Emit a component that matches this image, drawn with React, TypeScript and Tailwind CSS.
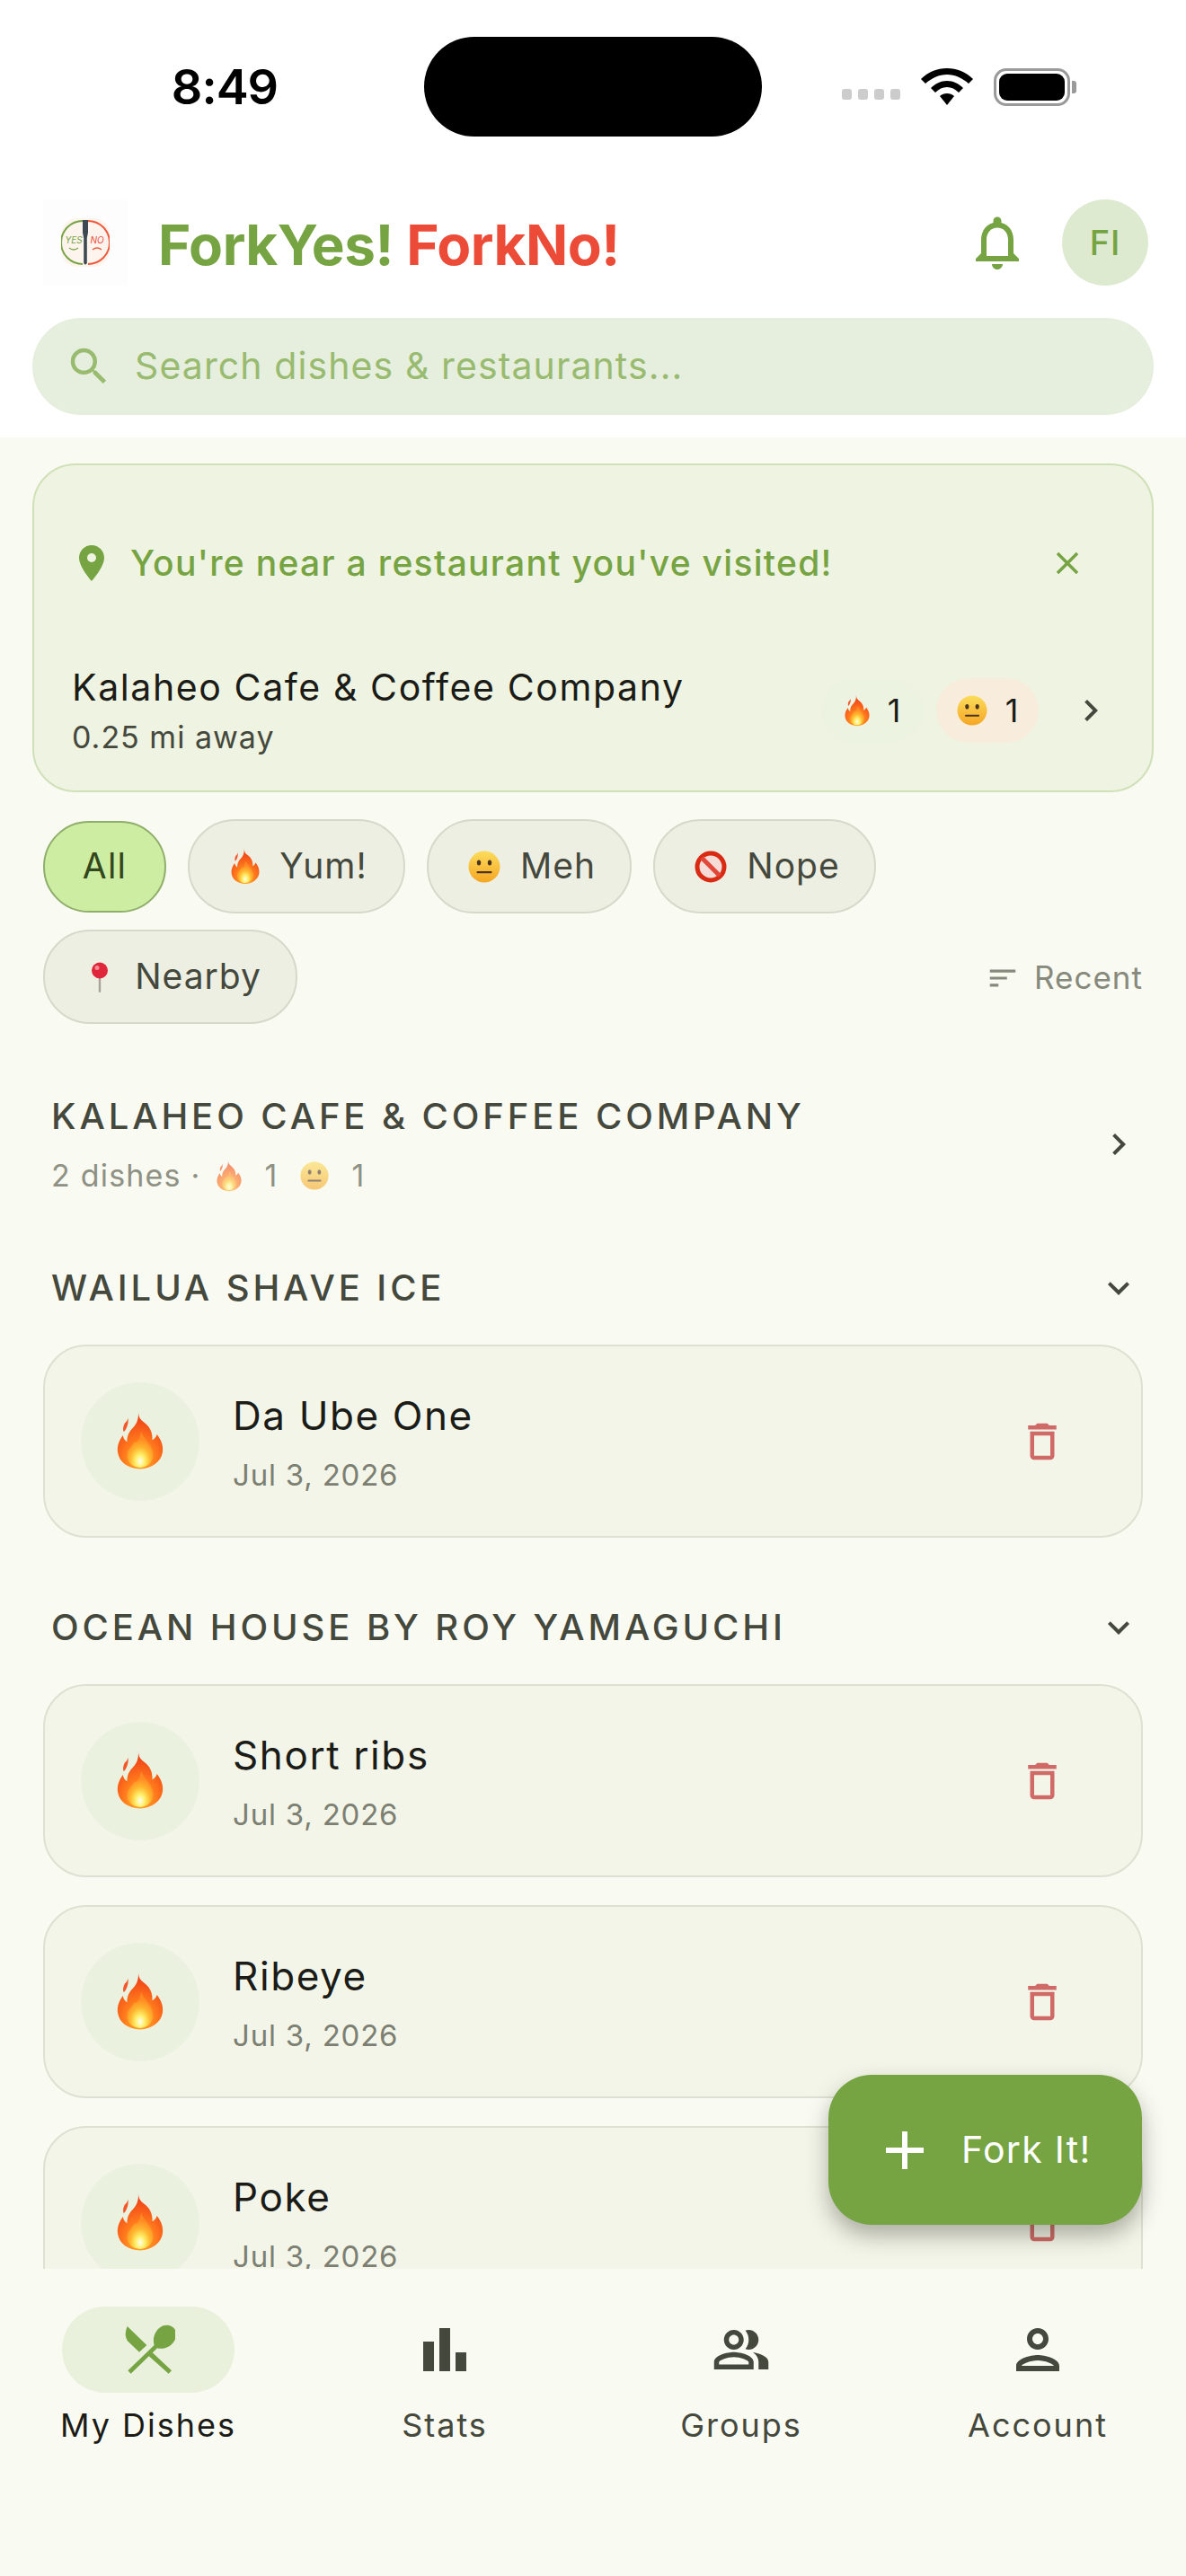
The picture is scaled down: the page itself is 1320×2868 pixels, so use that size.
import { ReactNode } from "react";
import {
  MdOutlineNotifications,
  MdSearch,
  MdLocationOn,
  MdClose,
  MdChevronRight,
  MdExpandMore,
  MdOutlineDelete,
  MdSort,
  MdAdd,
  MdBarChart,
  MdOutlinePeopleAlt,
  MdOutlinePerson,
} from "react-icons/md";

function Flame({ size }: { size: number }) {
  return (
    <svg width={size} height={size * 1.25} viewBox="0 0 100 125" className="shrink-0">
      <defs>
        <radialGradient id="flameFill" cx="50%" cy="85%" r="80%">
          <stop offset="0%" stopColor="#ffb52e" />
          <stop offset="45%" stopColor="#ff7a1c" />
          <stop offset="100%" stopColor="#ee3a17" />
        </radialGradient>
        <radialGradient id="flameCore" cx="50%" cy="82%" r="62%">
          <stop offset="0%" stopColor="#fffef0" />
          <stop offset="28%" stopColor="#fff06a" />
          <stop offset="62%" stopColor="#ffb52e" />
          <stop offset="100%" stopColor="#ff8a24" />
        </radialGradient>
      </defs>
      <path
        d="M46 0C47 12 50 16 58 22C70 31 77 42 76 60C80 58 84 54 86 48C95 60 100 72 98 86C95 106 76 121 50 122C24 121 5 108 2 86C0 72 6 60 13 50C14 56 17 61 22 64C22 50 26 42 36 32C43 25 47 14 46 0Z"
        fill="url(#flameFill)"
      />
      <path d="M17 24C20 22 23 18 24 13C26 24 21 37 15 43C12 37 14 30 17 24Z" fill="#f4562a" />
      <path
        d="M52 42C55 56 76 68 78 90C79 108 64 119 50 119C34 119 21 108 22 92C23 80 33 74 38 64C43 68 50 58 52 42Z"
        fill="url(#flameCore)"
      />
    </svg>
  );
}

function Meh({ size }: { size: number }) {
  return (
    <svg width={size} height={size} viewBox="0 0 36 36" className="shrink-0">
      <defs>
        <linearGradient id="mehFill" x1="0" y1="0" x2="0" y2="1">
          <stop offset="0%" stopColor="#fcdc5c" />
          <stop offset="100%" stopColor="#f5a623" />
        </linearGradient>
      </defs>
      <circle cx="18" cy="18" r="17.5" fill="url(#mehFill)" />
      <ellipse cx="12" cy="13.5" rx="2.2" ry="3" fill="#4a3420" />
      <ellipse cx="24" cy="13.5" rx="2.2" ry="3" fill="#4a3420" />
      <rect x="9.5" y="23" width="17" height="2.2" rx="1" fill="#4a3420" />
    </svg>
  );
}

function Nope({ size }: { size: number }) {
  return (
    <svg width={size} height={size} viewBox="0 0 36 36" className="shrink-0">
      <circle cx="18" cy="18" r="15" fill="#f6dcd6" stroke="#d92b14" strokeWidth="5" />
      <path d="M8 8L28 28" stroke="#e2483a" strokeWidth="5" />
    </svg>
  );
}

function RedPin() {
  return (
    <svg width={34} height={34} viewBox="-5 0 34 34" className="shrink-0">
      <rect x="10.800" y="12" width="2.400" height="22" rx="1.200" fill="#a9a49a" />
      <circle cx="12" cy="9.500" r="9" fill="#e0263a" />
      <circle cx="9" cy="6.500" r="2.500" fill="#f58a94" />
    </svg>
  );
}

function Logo() {
  return (
    <div className="w-[94px] h-[94px] bg-[#fdfdfd] flex items-center justify-center">
      <svg width={54} height={54} viewBox="0 0 54 54">
        <rect x="0" y="0" width="54" height="54" rx="18" fill="#fdf4ee" />
        <path d="M24 3A24 24 0 0 0 24 51" fill="none" stroke="#76a443" strokeWidth="2" />
        <path d="M30 3A24 24 0 0 1 30 51" fill="none" stroke="#ef5a3c" strokeWidth="2" />
        <path d="M24 2H30V16L28.800 22V50Q27 53 25.200 50V22L24 16Z" fill="#3d4a52" />
        <text x="14" y="28" fontSize="10" fontFamily="Inter, sans-serif" fontStyle="italic" fill="#76a443" textAnchor="middle">YES</text>
        <text x="40" y="28" fontSize="10" fontFamily="Inter, sans-serif" fontStyle="italic" fill="#ef4b38" textAnchor="middle">NO</text>
        <path d="M9 33Q14 37 19 33" fill="none" stroke="#76a443" strokeWidth="1.300" />
        <path d="M35 35Q40 31 45 35" fill="none" stroke="#ef5a3c" strokeWidth="1.300" />
      </svg>
    </div>
  );
}

function StatusBar() {
  return (
    <div className="h-[222px] pt-[41px] flex items-start">
      <div className="w-[472px] h-[111px] flex items-center justify-center pl-[28px]">
        <span className="text-[54px] font-semibold text-black font-['Inter',sans-serif] tracking-[-1px]">8:49</span>
      </div>
      <div className="w-[376px] h-[111px] rounded-[56px] bg-black" />
      <div className="flex-1 h-[111px] flex items-center pl-[89px] gap-[25px]">
        <div className="flex items-center gap-[7px] mt-[16px]">
          <span className="w-[11px] h-[12px] rounded-[3px] bg-[#cccccc]" />
          <span className="w-[11px] h-[12px] rounded-[3px] bg-[#cccccc]" />
          <span className="w-[11px] h-[12px] rounded-[3px] bg-[#cccccc]" />
          <span className="w-[11px] h-[12px] rounded-[3px] bg-[#cccccc]" />
        </div>
        <svg width={58} height={42} viewBox="0 0 58 42" className="-ml-[2px]">
          <path d="M29 0C40 0 50 4 58 12L53 17C46 11 38 7 29 7C20 7 12 11 5 17L0 12C8 4 18 0 29 0Z" fill="#000" />
          <path d="M29 14C36 14 42 17 47 22L42 27C38 23 34 21 29 21C24 21 20 23 16 27L11 22C16 17 22 14 29 14Z" fill="#000" />
          <path d="M29 28C32 28 35 29 37 31L29 41L21 31C23 29 26 28 29 28Z" fill="#000" />
        </svg>
        <div className="flex items-center -ml-[2px]">
          <div className="w-[85px] h-[42px] rounded-[14px] border-[3px] border-[#9a9a9a] p-[3px]">
            <div className="w-full h-full rounded-[9px] bg-black" />
          </div>
          <div className="w-[5px] h-[14px] rounded-r-[3px] bg-[#9a9a9a] ml-[2px]" />
        </div>
      </div>
    </div>
  );
}

function Header() {
  return (
    <header className="bg-white h-[487px] shrink-0">
      <StatusBar />
      <div className="h-[96px] flex items-center pl-[48px] pr-[42px]">
        <Logo />
        <div className="ml-[34px] mt-[5px] flex-1 text-[62px] leading-none font-bold tracking-[-0.500px] font-['Inter',sans-serif] whitespace-nowrap">
          <span className="text-[#76a443]">ForkYes!</span> <span className="text-[#ec4b38]">ForkNo!</span>
        </div>
        <MdOutlineNotifications size={72} className="text-[#76a443] mr-[36px]" />
        <div className="w-[96px] h-[96px] rounded-full bg-[#deead0] flex items-center justify-center text-[#76a443] text-[38px] font-medium tracking-[1px]">
          FI
        </div>
      </div>
      <div className="mt-[36px] mx-[36px] h-[108px] rounded-[54px] bg-[#e6eedd] flex items-center pl-[36px]">
        <MdSearch size={54} className="text-[#98bb70]" />
        <span className="ml-[24px] text-[41px] text-[#98bb70] tracking-[1.100px]">Search dishes &amp; restaurants...</span>
      </div>
    </header>
  );
}

function CountChip({ bg, icon, n }: { bg: string; icon: ReactNode; n: number }) {
  return (
    <div className={`h-[72px] w-[114px] rounded-[36px] flex items-center justify-center gap-[20px] ${bg}`}>
      {icon}
      <span className="text-[36px] text-[#1b1c17]">{n}</span>
    </div>
  );
}

function NearbyBanner() {
  return (
    <section className="mx-[36px] mt-[29px] h-[366px] rounded-[48px] bg-[#eff3e1] border-2 border-[#d0e0b8] pl-[42px] pr-[54px]">
      <div className="h-[118px] mt-[50px] flex items-center">
        <MdLocationOn size={48} className="text-[#76a443] -ml-[2px]" />
        <span className="ml-[19px] flex-1 text-[39px] font-medium text-[#76a443] tracking-[1.300px]">
          You're near a restaurant you've visited!
        </span>
        <MdClose size={42} className="text-[#76a443] mr-[19px]" />
      </div>
      <div className="flex items-center justify-between mt-[51px]">
        <div>
          <div className="text-[41px] leading-[56px] text-[#1b1c17] tracking-[1.600px]">Kalaheo Cafe &amp; Coffee Company</div>
          <div className="text-[34px] leading-[48px] mt-[4px] text-[#45483c] tracking-[1px]">0.25 mi away</div>
        </div>
        <div className="flex items-center -mr-[10px]">
          <CountChip bg="bg-[#ecf3e0]" icon={<Flame size={28} />} n={1} />
          <div className="w-[14px]" />
          <CountChip bg="bg-[#f8ecdd]" icon={<Meh size={34} />} n={1} />
          <MdChevronRight size={48} className="text-[#45483c] ml-[34px]" />
        </div>
      </div>
    </section>
  );
}

function FilterChip({ icon, label, w }: { icon: ReactNode; label: string; w: string }) {
  return (
    <div className={`h-[105px] rounded-[52px] bg-[#edefe3] border-2 border-[#d6d9ca] flex items-center justify-center gap-[22px] pl-[6px] ${w}`}>
      {icon}
      <span className="text-[39px] text-[#45483c] tracking-[1px]">{label}</span>
    </div>
  );
}

function Filters() {
  return (
    <div className="mt-[30px] mx-[48px]">
      <div className="flex items-center gap-[24px]">
        <div className="w-[137px] h-[102px] rounded-[51px] bg-[#cdeda3] border-2 border-[#8fae6a] flex items-center justify-center text-[39px] text-[#33471c] tracking-[1.200px]">
          All
        </div>
        <FilterChip icon={<Flame size={32} />} label="Yum!" w="w-[242px]" />
        <FilterChip icon={<Meh size={36} />} label="Meh" w="w-[228px]" />
        <FilterChip icon={<Nope size={36} />} label="Nope" w="w-[248px]" />
      </div>
      <div className="flex items-center justify-between mt-[18px]">
        <FilterChip icon={<RedPin />} label="Nearby" w="w-[283px]" />
        <div className="flex items-center gap-[16px] text-[#86897c] pt-[2px]">
          <MdSort size={38} />
          <span className="text-[35px] tracking-[1px]">Recent</span>
        </div>
      </div>
    </div>
  );
}

function SectionTitle({ title }: { title: string }) {
  return (
    <div className="flex items-center justify-between pl-[9px]">
      <span className="text-[40px] leading-[58px] font-medium text-[#45483c] tracking-[3.900px] uppercase whitespace-nowrap">{title}</span>
      <MdExpandMore size={48} className="text-[#45483c] mr-[3px]" />
    </div>
  );
}

function DishCard({ name }: { name: string }) {
  return (
    <div className="h-[215px] rounded-[48px] bg-[#f3f5e9] border-2 border-[#dee0d1] flex items-center pl-[40px] pr-[83px] shrink-0">
      <div className="w-[132px] h-[132px] rounded-full bg-[#eaf2df] flex items-center justify-center">
        <Flame size={52} />
      </div>
      <div className="ml-[37px] flex-1 mt-[2px]">
        <div className="text-[44px] leading-[60px] text-[#1b1c17] tracking-[1.600px]">{name}</div>
        <div className="text-[33px] leading-[46px] mt-[13px] text-[#7c7f72] tracking-[0.800px]">Jul 3, 2026</div>
      </div>
      <MdOutlineDelete size={54} className="text-[#d06a66]" />
    </div>
  );
}

function MainList() {
  return (
    <div className="mx-[48px]">
      <div className="mt-[75px] flex items-center justify-between">
        <div className="pl-[9px]">
          <div className="text-[40px] leading-[56px] font-medium text-[#45483c] tracking-[3.900px] uppercase whitespace-nowrap">
            Kalaheo Cafe &amp; Coffee Company
          </div>
          <div className="flex items-center mt-[15px] text-[34px] leading-[46px] text-[#8e9184] tracking-[1.200px]">
            <span>2 dishes ·</span>
            <span className="ml-[17px] opacity-60 flex items-center"><Flame size={28} /></span>
            <span className="ml-[26px]">1</span>
            <span className="ml-[24px] opacity-60 flex items-center"><Meh size={32} /></span>
            <span className="ml-[26px]">1</span>
          </div>
        </div>
        <MdChevronRight size={48} className="text-[#45483c] mr-[3px]" />
      </div>

      <div className="mt-[73px]">
        <SectionTitle title="Wailua Shave Ice" />
      </div>
      <div className="mt-[34px]">
        <DishCard name="Da Ube One" />
      </div>

      <div className="mt-[71px]">
        <SectionTitle title="Ocean House by Roy Yamaguchi" />
      </div>
      <div className="mt-[34px] flex flex-col gap-[31px]">
        <DishCard name="Short ribs" />
        <DishCard name="Ribeye" />
        <DishCard name="Poke" />
      </div>
    </div>
  );
}

function Fab() {
  return (
    <div className="absolute right-[49px] top-[1823px] w-[349px] h-[167px] rounded-[48px] bg-[#76a443] flex items-center pl-[49px] shadow-[0_12px_24px_rgba(40,40,30,0.35)]">
      <MdAdd size={72} className="text-white" />
      <span className="ml-[27px] text-[41px] text-white tracking-[1.300px]">Fork It!</span>
    </div>
  );
}

function NavItem({ icon, label, active }: { icon: ReactNode; label: string; active?: boolean }) {
  return (
    <div className="flex-1 flex flex-col items-center">
      <div className={`w-[192px] h-[96px] rounded-[48px] flex items-center justify-center ${active ? "bg-[#e9f0db]" : ""}`}>{icon}</div>
      <span className={`mt-[12px] text-[36px] leading-[48px] tracking-[2px] ${active ? "text-[#1b1c17]" : "text-[#45483c]"}`}>
        {label}
      </span>
    </div>
  );
}

function BottomNav() {
  return (
    <nav className="h-[342px] shrink-0 pt-[42px] flex bg-[#f9faf1]">
      <NavItem
        active
        label="My Dishes"
        icon={
          <svg width={60} height={60} viewBox="220 80 180 180">
            <path d="M240 92L305 155L280 178L240 140Q228 120 240 92Z" fill="#76a443" />
            <path d="M316 172L388 240L378 250L304 184Z" fill="#76a443" />
            <path d="M242 240L330 155C322 130 335 100 360 90C385 82 408 100 403 125C398 155 365 172 340 165L252 250Z" fill="#76a443" />
          </svg>
        }
      />
      <NavItem label="Stats" icon={<MdBarChart size={72} className="text-[#45483c]" />} />
      <NavItem label="Groups" icon={<MdOutlinePeopleAlt size={66} className="text-[#45483c]" />} />
      <NavItem label="Account" icon={<MdOutlinePerson size={72} className="text-[#45483c]" />} />
    </nav>
  );
}

export default function App() {
  return (
    <div className="w-[1320px] h-[2868px] flex flex-col bg-[#f9faf1] overflow-hidden font-['Inter',sans-serif]">
      <Header />
      <main className="relative flex-1 min-h-0">
        <div className="absolute inset-0 overflow-hidden">
          <NearbyBanner />
          <Filters />
          <MainList />
        </div>
        <Fab />
      </main>
      <BottomNav />
    </div>
  );
}
